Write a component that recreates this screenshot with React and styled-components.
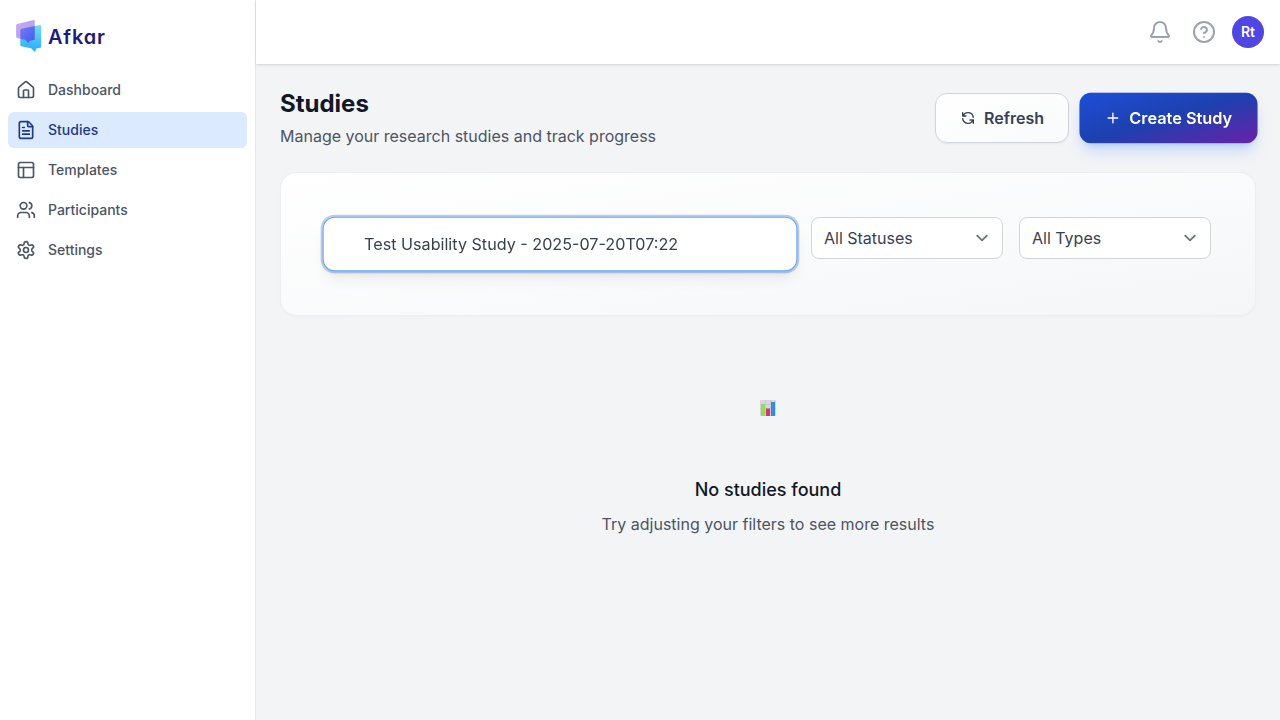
import React from "react";
import styled, { createGlobalStyle, css } from "styled-components";
import { House, FileText, PanelsTopLeft, Users, Plus } from "lucide-react";

const GlobalStyle = createGlobalStyle`
  *, *::before, *::after { box-sizing: border-box; }
  body { margin: 0; background: #f3f4f6; font-family: Inter, sans-serif; font-size: 16px; line-height: 24px; color: #111827; }
  h1, h2, p { margin: 0; }
  button, input { font: inherit; }
`;

const Shell = styled.div`
  display: flex;
  height: 100vh;
  overflow: hidden;
`;

const Sidebar = styled.aside`
  width: 256px;
  flex: none;
  background: #fff;
  border-right: 1px solid #e5e7eb;
`;

const Brand = styled.div`
  display: flex;
  align-items: center;
  gap: 6px;
  height: 72px;
  padding-left: 15px;
  svg { display: block; }
`;

const BrandName = styled.span`
  padding-top: 1px;
  font-size: 20px;
  font-weight: 600;
  letter-spacing: 0.85px;
  color: #1e1b7b;
  font-feature-settings: "cv11";
`;

const Nav = styled.nav`
  display: flex;
  flex-direction: column;
  gap: 4px;
  padding: 0 8px;
`;

const NavItem = styled.a`
  display: flex;
  align-items: center;
  gap: 12px;
  height: 36px;
  padding: 0 8px;
  border-radius: 6px;
  font-size: 14px;
  line-height: 20px;
  font-weight: 500;
  color: #4b5563;
  ${(p) => p.$active && css`
    background: #dbeafe;
    color: #1e3a8a;
  `}
`;

const Page = styled.div`
  display: flex;
  flex-direction: column;
  flex: 1;
  min-width: 0;
`;

const TopBar = styled.header`
  display: flex;
  align-items: center;
  justify-content: flex-end;
  height: 64px;
  flex: none;
  padding-right: 16px;
  background: #fff;
  box-shadow: 0 1px 3px rgba(0, 0, 0, 0.1), 0 1px 2px -1px rgba(0, 0, 0, 0.1);
`;

const IconButton = styled.button`
  display: flex;
  margin-right: ${(p) => p.$gap}px;
  padding: 0;
  border: 0;
  background: none;
  color: #9ca3af;
`;

const Avatar = styled.div`
  display: flex;
  align-items: center;
  justify-content: center;
  width: 32px;
  height: 32px;
  border-radius: 50%;
  background: #4f46e5;
  color: #fff;
  font-size: 14px;
  font-weight: 600;
`;

const Content = styled.main`
  padding: 24px;
`;

const Heading = styled.div`
  display: flex;
  justify-content: space-between;
  height: 84px;
`;

const Title = styled.h1`
  font-size: 24px;
  line-height: 32px;
  font-weight: 700;
`;

const Subtitle = styled.p`
  margin-top: 4px;
  font-weight: 380;
  color: #4b5563;
`;

const Actions = styled.div`
  display: flex;
  gap: 12px;
  padding-top: 5px;
`;

const Button = styled.button`
  display: flex;
  align-items: center;
  gap: 8px;
  height: 50px;
  padding: 0 24px;
  border: 1px solid #d1d5db;
  border-radius: 12px;
  background: linear-gradient(to bottom right, #ffffff, #f9fafb);
  box-shadow: 0 1px 2px rgba(0, 0, 0, 0.05);
  font-weight: 600;
  color: #374151;
  ${(p) => p.$primary && css`
    border-color: rgba(37, 99, 235, 0.2);
    background: linear-gradient(to bottom right, #1d4ed8 0%, #1e40af 50%, #6b21a8 100%) border-box;
    box-shadow: 0 10px 15px -3px rgba(59, 130, 246, 0.25), 0 4px 6px -4px rgba(59, 130, 246, 0.25);
    color: #fff;
    transform: scale(1.02);
    will-change: transform;
  `}
`;

const Filters = styled.section`
  display: flex;
  align-items: flex-start;
  gap: 16px;
  height: 144px;
  padding: 44px;
  border: 1px solid rgba(229, 231, 235, 0.5);
  border-radius: 16px;
  background: linear-gradient(to bottom right, #ffffff, #f9fafb 60%, #f5f6f8);
  background-clip: padding-box;
  box-shadow: 0 1px 2px rgba(0, 0, 0, 0.02);
`;

const Search = styled.input`
  flex: 1;
  min-width: 0;
  height: 54px;
  padding: 0 40px;
  border: 1px solid #60a5fa;
  border-radius: 12px;
  outline: 0;
  background: #fff;
  box-shadow: 0 0 0 2px rgba(80, 125, 205, 0.38), 0 10px 15px -3px rgba(0, 0, 0, 0.08), 0 4px 6px -4px rgba(0, 0, 0, 0.1);
  color: #374151;
  transform: scale(1.01);
  will-change: transform;
`;

const Select = styled.div`
  display: flex;
  align-items: center;
  justify-content: space-between;
  width: 192px;
  height: 42px;
  padding: 0 8px 0 12px;
  border: 1px solid #d1d5db;
  border-radius: 8px;
  background: #fff;
  color: #374151;
  svg { color: #6b7280; }
`;

const Empty = styled.section`
  display: flex;
  flex-direction: column;
  align-items: center;
  padding-top: 80px;
`;

const ChartMark = styled.div`
  display: flex;
  align-items: center;
  height: 24px;
`;

const EmptyTitle = styled.h2`
  margin-top: 56px;
  font-size: 18px;
  line-height: 28px;
  font-weight: 500;
`;

const EmptyText = styled.p`
  margin-top: 8px;
  font-weight: 390;
  color: #4b5563;
`;

function StrokeIcon({ size = 24, box = 24, width = 2, children }) {
  return (
    <svg width={size} height={size} viewBox={`0 0 ${box} ${box}`} fill="none" stroke="currentColor" strokeWidth={width} strokeLinecap="round" strokeLinejoin="round">
      {children}
    </svg>
  );
}

const GearIcon = ({ size }) => (
  <StrokeIcon size={size}>
    <path d="M12.22 2h-.44a2 2 0 0 0-2 2v.18a2 2 0 0 1-1 1.73l-.43.25a2 2 0 0 1-2 0l-.15-.08a2 2 0 0 0-2.73.73l-.22.38a2 2 0 0 0 .73 2.73l.15.1a2 2 0 0 1 1 1.72v.51a2 2 0 0 1-1 1.74l-.15.09a2 2 0 0 0-.73 2.73l.22.38a2 2 0 0 0 2.73.73l.15-.08a2 2 0 0 1 2 0l.43.25a2 2 0 0 1 1 1.73V20a2 2 0 0 0 2 2h.44a2 2 0 0 0 2-2v-.18a2 2 0 0 1 1-1.73l.43-.25a2 2 0 0 1 2 0l.15.08a2 2 0 0 0 2.73-.73l.22-.39a2 2 0 0 0-.73-2.73l-.15-.08a2 2 0 0 1-1-1.74v-.5a2 2 0 0 1 1-1.74l.15-.09a2 2 0 0 0 .73-2.73l-.22-.38a2 2 0 0 0-2.73-.73l-.15.08a2 2 0 0 1-2 0l-.43-.25a2 2 0 0 1-1-1.73V4a2 2 0 0 0-2-2z" />
    <circle cx="12" cy="12" r="3" />
  </StrokeIcon>
);

const BellIcon = () => (
  <StrokeIcon>
    <path d="M10.268 21a2 2 0 0 0 3.464 0" />
    <path d="M3.262 15.326A1 1 0 0 0 4 17h16a1 1 0 0 0 .74-1.673C19.41 13.956 18 12.499 18 8A6 6 0 0 0 6 8c0 4.499-1.411 5.956-2.738 7.326" />
  </StrokeIcon>
);

const HelpIcon = () => (
  <StrokeIcon>
    <circle cx="12" cy="12" r="10" />
    <path d="M9.09 9a3 3 0 0 1 5.83 1c0 2-3 3-3 3" />
    <path d="M12 17h.01" />
  </StrokeIcon>
);

const RefreshIcon = () => (
  <StrokeIcon size={16}>
    <path d="M4 4v5h.582m15.356 2A8.001 8.001 0 004.582 9m0 0H9m11 11v-5h-.581m0 0a8.003 8.003 0 01-15.357-2m15.357 2H15" />
  </StrokeIcon>
);

const SelectArrow = () => (
  <StrokeIcon box={20} width={1.5}>
    <path d="M6 8l4 4 4-4" />
  </StrokeIcon>
);

const NAV = [
  { label: "Dashboard", Icon: House },
  { label: "Studies", Icon: FileText, active: true },
  { label: "Templates", Icon: PanelsTopLeft },
  { label: "Participants", Icon: Users },
  { label: "Settings", Icon: GearIcon },
];

function Logo() {
  return (
    <svg width="27" height="34" viewBox="0 0 27 34">
      <defs>
        <linearGradient id="sky" x1="0" y1="0" x2="0" y2="1">
          <stop offset="0" stopColor="#74dcfb" />
          <stop offset="1" stopColor="#1faefe" />
        </linearGradient>
        <linearGradient id="lilac" x1="0" y1="0" x2="1" y2="1">
          <stop offset="0" stopColor="#c8abf3" />
          <stop offset="1" stopColor="#a99df0" />
        </linearGradient>
        <linearGradient id="indigo" x1="0" y1="0" x2="1" y2="1">
          <stop offset="0" stopColor="#7f78f0" />
          <stop offset="1" stopColor="#3560f5" />
        </linearGradient>
      </defs>
      <path d="M5.3 11.2Q5.3 10 6.5 9.7L24.8 6Q26 5.8 26 7V27.4Q26 28.5 25 28.8L21.3 29.6L20 33L16 29.3L6.3 27.2Q5.3 26.9 5.3 26Z" fill="url(#sky)" />
      <path d="M1.1 6.5Q1.1 5.4 2.2 5.1L18.5 1.1Q19.7.9 19.7 2V20.7L14.4 22L13.3 24.5L10.7 21L2.2 19Q1.1 18.7 1.1 17.6Z" fill="url(#lilac)" />
      <path d="M5.3 11.2Q5.3 10 6.5 9.7L19.7 7V20.7L14.4 22L13.3 24.5L10.7 21L5.3 19.8Z" fill="url(#indigo)" />
    </svg>
  );
}

function BarChartIcon() {
  return (
    <svg width="16" height="16" viewBox="0 0 16 16">
      <rect width="16" height="16" rx="1" fill="#d8d5e0" />
      <path d="M0 4.5H16M0 8.5H16M0 12.5H16M5.5 0V16M10.5 0V16" stroke="#c3c0cd" strokeWidth=".6" />
      <rect x="1" y="4" width="4" height="12" fill="#8ee052" />
      <rect x="6" y="8.5" width="4" height="7.5" fill="#e0306f" />
      <rect x="11" y="2" width="4" height="14" fill="#2e8fe2" />
    </svg>
  );
}

export default function App() {
  return (
    <>
      <GlobalStyle />
      <Shell>
        <Sidebar>
          <Brand>
            <Logo />
            <BrandName>Afkar</BrandName>
          </Brand>
          <Nav>
            {NAV.map(({ label, Icon, active }) => (
              <NavItem key={label} $active={active}>
                <Icon size={20} />
                {label}
              </NavItem>
            ))}
          </Nav>
        </Sidebar>
        <Page>
          <TopBar>
            <IconButton $gap={20} aria-label="Notifications"><BellIcon /></IconButton>
            <IconButton $gap={16} aria-label="Help"><HelpIcon /></IconButton>
            <Avatar>Rt</Avatar>
          </TopBar>
          <Content>
            <Heading>
              <div>
                <Title>Studies</Title>
                <Subtitle>Manage your research studies and track progress</Subtitle>
              </div>
              <Actions>
                <Button><RefreshIcon />Refresh</Button>
                <Button $primary><Plus size={16} />Create Study</Button>
              </Actions>
            </Heading>
            <Filters>
              <Search defaultValue="Test Usability Study - 2025-07-20T07:22" />
              <Select>All Statuses<SelectArrow /></Select>
              <Select>All Types<SelectArrow /></Select>
            </Filters>
            <Empty>
              <ChartMark><BarChartIcon /></ChartMark>
              <EmptyTitle>No studies found</EmptyTitle>
              <EmptyText>Try adjusting your filters to see more results</EmptyText>
            </Empty>
          </Content>
        </Page>
      </Shell>
    </>
  );
}
